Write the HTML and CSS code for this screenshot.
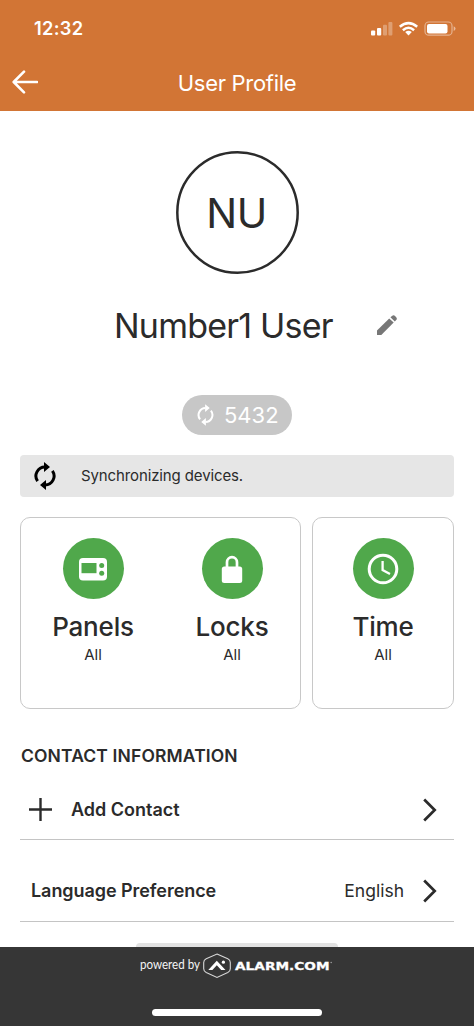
FILE: index.html
```html
<!DOCTYPE html>
<html lang="en">
<head>
<meta charset="utf-8">
<title>User Profile</title>
<link rel="stylesheet" href="styles.css">
</head>
<body>
<div class="screen">
  <header class="header">
    <div class="status">
      <span class="clock">12:32</span>
      <svg class="status-icons" width="86" height="18" viewBox="0 0 86 18">
        <g fill="#fff">
          <rect x="0" y="10.5" width="4.2" height="5" rx="1"/>
          <rect x="6" y="8" width="4.2" height="7.5" rx="1"/>
          <g opacity=".3"><rect x="12" y="4.8" width="4" height="10.7" rx="1"/><rect x="17.4" y="2" width="4" height="13.5" rx="1"/></g>
        </g>
        <g fill="none" stroke="#fff" stroke-width="2.5"><path d="M28.8 6.8Q37.5-.5 46.2 6.8"/><path d="M31.9 10.2Q37.5 5.4 43.1 10.2"/></g>
        <path d="M34.2 12.1Q37.5 9.5 40.8 12.1L37.5 15.5Z" fill="#fff"/>
        <rect x="54" y="2" width="27" height="13.2" rx="3.8" fill="none" stroke="#fff" stroke-opacity=".45" stroke-width="1.2"/>
        <rect x="56" y="4" width="20.5" height="9.4" rx="2" fill="#fff"/>
        <path d="M82.7 6.3Q84.5 7 84.5 8.6T82.7 11Z" fill="#fff" opacity=".5"/>
      </svg>
    </div>
    <div class="titlebar">
      <svg class="back" width="26" height="24" viewBox="0 0 26 24"><path d="M25 12H2M12 1.7L1.7 12L12 22.3" fill="none" stroke="#fff" stroke-width="2.6" stroke-linecap="round" stroke-linejoin="round"/></svg>
      <h1 class="title">User Profile</h1>
    </div>
  </header>

  <main class="content">
    <div class="avatar">
      <svg class="ring" width="123" height="123" viewBox="0 0 123 123"><circle cx="61.5" cy="61.5" r="60.2" fill="none" stroke="#2b2b2b" stroke-width="2.5"/></svg>
      <span class="initials">NU</span>
    </div>
    <div class="name-row">
      <h2 class="name">Number1 User</h2>
      <svg class="pencil" width="20" height="20" viewBox="0 0 20 20" fill="#777"><path d="M0 20V15.6L12.2 3.4L16.7 7.6L4.3 20Z"/><path d="M13.4 2.3L15 .9Q16.4-.4 17.8.8L19.2 2.2Q20.5 3.6 19.2 5.1L17.8 6.5Z"/></svg>
    </div>
    <div class="code">
      <svg width="17" height="22" viewBox="0 0 22 28"><path d="M4 19.6A9 9 0 0 1 11 5M18 8.4A9 9 0 0 1 11 23" fill="none" stroke="#fff" stroke-width="2.6"/><path d="M10.5 0L16.5 5L10.5 10ZM11.5 18L5.5 23L11.5 28Z" fill="#fff"/></svg>
      <span class="code-text">5432</span>
    </div>
    <div class="sync">
      <svg width="22" height="28" viewBox="0 0 22 28"><path d="M3.6 19.2A9 9 0 0 1 11 5M18.4 8.8A9 9 0 0 1 11 23" fill="none" stroke="#000" stroke-width="3"/><path d="M10 0L16 5L10 10ZM12 18L6 23L12 28Z"/></svg>
      <span class="sync-text">Synchronizing devices.</span>
    </div>
    <section class="cards">
      <div class="card card-double">
        <div class="access">
          <div class="disc"><svg width="30" height="24" viewBox="0 0 30 24"><rect x="1" y="1" width="28" height="22.5" rx="4" fill="#fff"/><g fill="#50a84b"><rect x="3.5" y="6" width="15" height="10.2"/><circle cx="23.7" cy="8.5" r="2.5"/><circle cx="23.7" cy="16.2" r="2.5"/></g></svg></div>
          <h3 class="label">Panels</h3><p class="scope">All</p>
        </div>
        <div class="access">
          <div class="disc"><svg width="22" height="28" viewBox="0 0 22 28"><path d="M6 13V7.2a5 5 0 0 1 10 0V13" fill="none" stroke="#fff" stroke-width="2.7"/><rect x=".8" y="11.5" width="20.4" height="16.5" rx="2.5" fill="#fff"/></svg></div>
          <h3 class="label">Locks</h3><p class="scope">All</p>
        </div>
      </div>
      <div class="card">
        <div class="access">
          <div class="disc"><svg width="32" height="32" viewBox="0 0 32 32" fill="none" stroke="#fff"><circle cx="16" cy="16" r="13.8" stroke-width="3"/><path d="M15.6 8V17L23 21" stroke-width="2.3"/></svg></div>
          <h3 class="label">Time</h3><p class="scope">All</p>
        </div>
      </div>
    </section>

    <h4 class="section-title">CONTACT INFORMATION</h4>
    <div class="row row-add">
      <svg class="plus" width="23" height="23" viewBox="0 0 23 23"><path d="M11.5 0V23M0 11.5H23" stroke="#2b2b2b" stroke-width="2.4"/></svg>
      <span class="row-label add-label">Add Contact</span>
      <svg class="chevron" width="14" height="24" viewBox="0 0 14 24"><path d="M1.2 1.5L11.7 12L1.2 22.5" fill="none" stroke="#2b2b2b" stroke-width="2.7"/></svg>
    </div>
    <div class="row row-language">
      <span class="row-label language-label">Language Preference</span>
      <span class="value">English</span>
      <svg class="chevron" width="14" height="24" viewBox="0 0 14 24"><path d="M1.2 1.5L11.7 12L1.2 22.5" fill="none" stroke="#2b2b2b" stroke-width="2.7"/></svg>
    </div>
    <div class="next-button"></div>
  </main>

  <footer class="footer">
    <svg class="brand" width="196" height="30" viewBox="0 0 196 30">
      <text class="powered" x="1" y="19.2" textLength="60" lengthAdjust="spacingAndGlyphs">powered by</text>
      <path d="M78 4L88.8 8.8Q91.3 10 91.3 12.5V18.8Q91.3 21.3 88.8 22.6L78 27.4L67.2 22.6Q64.7 21.3 64.7 18.8V12.5Q64.7 10 67.2 8.8Z" fill="none" stroke="#d8d8d8" stroke-width="1.1"/>
      <path d="M69.3 20L77.8 10.8L86.5 20H82.2L77.8 15.2L73.4 20Z" fill="#fff"/><circle cx="84.4" cy="12.2" r="1.6" fill="#fff"/>
      <text class="wordmark" x="96" y="19.6" textLength="94.5" lengthAdjust="spacingAndGlyphs">ALARM.COM</text>
      <circle cx="192.2" cy="12.5" r=".8" fill="#999"/>
    </svg>
    <div class="home-indicator"></div>
  </footer>
</div>
</body>
</html>
```
FILE: styles.css
```css
* { box-sizing: border-box; }
body { margin: 0; background: #fff; color: #2b2b2b; font-family: Inter, "Liberation Sans", sans-serif; }
h1, h2, h3, h4, p { margin: 0; font-weight: 400; }
svg { display: block; flex: none; }
.screen { width: 474px; height: 1026px; display: flex; flex-direction: column; overflow: hidden; }

.header { height: 111px; flex: none; background: #d27535; color: #fff; }
.status { height: 56px; padding: 20px 17px 0 34px; display: flex; justify-content: space-between; align-items: flex-start; }
.clock { font-size: 18.3px; line-height: 17px; font-weight: 600; letter-spacing: .3px; }
.titlebar { height: 53px; display: grid; grid-template-columns: 1fr auto 1fr; align-items: center; padding: 0 12px; }
.title { font-size: 22px; line-height: 28px; letter-spacing: -.3px; }
.back { margin-top: -2px; }

.content { flex: 1; min-height: 0; padding: 40px 20px 0; display: flex; flex-direction: column; overflow: hidden; }
.avatar { width: 123px; height: 123px; flex: none; align-self: center; display: grid; place-items: center; }
.ring, .initials { grid-area: 1 / 1; }
.initials { font-size: 41px; letter-spacing: -.5px; padding-right: 1px; }
.name-row { height: 44px; flex: none; margin-top: 30px; display: flex; align-items: center; padding-left: 94px; }
.name { width: 263px; font-size: 34px; line-height: 44px; white-space: nowrap; letter-spacing: -.78px; }
.pencil { margin-top: -2px; }
.code { width: 110px; height: 40px; flex: none; margin-top: 47px; align-self: center; border-radius: 20px; background: #c7c7c7; color: #fff; display: flex; align-items: center; gap: 10px; padding-left: 15px; }
.code-text { font-size: 22px; line-height: 40px; }
.sync { height: 42px; flex: none; margin-top: 20px; border-radius: 4px; background: #e6e6e6; display: flex; align-items: center; padding-left: 14px; gap: 25px; }
.sync-text { font-size: 15px; line-height: 20px; letter-spacing: -.12px; }

.cards { height: 192px; flex: none; margin-top: 20px; display: grid; grid-template-columns: 281px 142px; gap: 11px; }
.card { border: 1.5px solid #c8c8c8; border-radius: 10px; display: flex; justify-content: center; padding-top: 20px; }
.card-double { padding-left: 4px; }
.card-double .access { width: 139px; flex: none; }
.access { display: flex; flex-direction: column; align-items: center; }
.disc { width: 61px; height: 61px; border-radius: 50%; background: #50a84b; display: flex; justify-content: center; align-items: center; }
.label { margin-top: 12px; font-size: 26px; line-height: 32px; font-weight: 500; letter-spacing: -.2px; }
.scope { margin-top: 2px; font-size: 15px; line-height: 20px; }

.section-title { margin-top: 36px; padding-left: 1px; font-size: 17.5px; line-height: 22px; font-weight: 600; letter-spacing: .13px; }
.row { flex: none; display: flex; align-items: center; border-bottom: 1.5px solid #c4c4c4; padding-right: 17px; }
.row-add { height: 60px; margin-top: 13px; padding-left: 9px; }
.row-language { height: 61px; margin-top: 21px; padding-left: 11px; }
.row-label { font-size: 18px; line-height: 24px; font-weight: 600; }
.add-label { margin-left: 19px; padding-top: 1px; }
.value { margin-left: auto; margin-right: 19px; font-size: 17.5px; line-height: 24px; }
.language-label { letter-spacing: -.06px; }
.row-add .chevron { margin-left: auto; }
.next-button { width: 202px; height: 20px; flex: none; margin-top: 21px; align-self: center; border-radius: 4px; background: #e2e2e2; }

.footer { height: 79px; flex: none; background: #363636; display: flex; flex-direction: column; align-items: center; padding-top: 3px; }
.powered { font: 12.5px Lato, sans-serif; fill: #f4f4f4; }
.wordmark { font: bold 11.3px "DejaVu Sans", sans-serif; fill: #fff; stroke: #fff; stroke-width: .3px; }
.home-indicator { width: 170px; height: 7px; margin-top: 29px; border-radius: 4px; background: #fff; }
```
